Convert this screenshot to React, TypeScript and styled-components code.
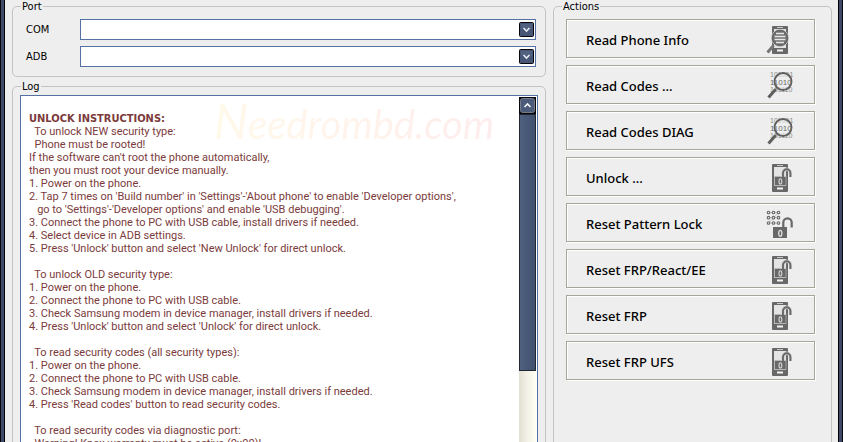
import React from "react";
import styled, { createGlobalStyle } from "styled-components";

const GlobalStyle = createGlobalStyle`
  *, *::before, *::after { box-sizing: border-box; }
  html, body { margin: 0; height: 100%; overflow: hidden; background: #eeeeee; }
  body, button, select {
    font-family: "DejaVu Sans Condensed", "Noto Sans", sans-serif;
    font-size: 11px;
    line-height: 13px;
    color: #000;
  }
`;

const Frame = styled.div`
  display: flex;
  min-height: 100vh;
  border-style: solid;
  border-width: 0 1px;
  border-color: #05070d;
  background: #3f4a69;
  padding: 0 3px;
`;

const Content = styled.main`
  flex: 1;
  display: grid;
  grid-template-columns: minmax(0, 1fr) 279px;
  gap: 7px;
  padding: 0 6px 0 7px;
  border-style: solid;
  border-width: 0 1px;
  border-color: #000;
  background: #eeeeee;
`;

const LeftColumn = styled.div`
  display: flex;
  flex-direction: column;
  gap: 3px;
`;

const Group = styled.fieldset`
  min-width: 0;
  margin: 0;
  padding: 0;
  border: 1px solid #c3c3c3;
  border-radius: 5px;
`;

const GroupTitle = styled.legend`
  margin-left: 8px;
  padding: 0 1px;
`;

const GroupBody = styled.div<{ $pad: string }>`
  padding: ${(p) => p.$pad};
`;

const Field = styled.div`
  display: grid;
  grid-template-columns: 54px minmax(0, 1fr);
  align-items: center;

  & + & {
    margin-top: 6px;
  }
`;

const Combo = styled.div`
  position: relative;
  display: flex;
`;

const Select = styled.select`
  width: 100%;
  height: 21px;
  appearance: none;
  border: 1px solid #5570a3;
  border-radius: 0;
  background: #fff;
`;

const ComboArrow = styled.svg`
  position: absolute;
  top: 3px;
  right: 2px;
  pointer-events: none;
`;

const LogBox = styled.div`
  position: relative;
  display: grid;
  grid-template-columns: minmax(0, 1fr) 17px;
  border: 1px solid #5570a3;
  background: #fff;
  padding: 1px;
`;

const LogText = styled.div`
  position: relative;
  padding: 15px 7px;
  color: #7b3b3b;
  font-family: Roboto, sans-serif;
  white-space: pre;
`;

const LogLine = styled.div<{ $strong?: boolean }>`
  min-height: 13px;
  font-weight: ${(p) => (p.$strong ? 700 : 400)};
  font-family: ${(p) => (p.$strong ? '"DejaVu Sans Condensed", sans-serif' : "inherit")};
`;

const Watermark = styled.div`
  position: absolute;
  top: 0;
  left: 192px;
  padding-right: 8px;
  font: italic 40px/48px Lato, sans-serif;
  color: transparent;
  background: linear-gradient(90deg, #fff9ea, #fff3ec 50%, #fdeced);
  background-clip: text;
  pointer-events: none;

  &::first-letter {
    font-size: 48px;
  }
`;

const Scrollbar = styled.div`
  display: flex;
  flex-direction: column;
  background: linear-gradient(90deg, #e2ded2, #f3f2e8 50%, #fffff2);
`;

const ScrollButton = styled.button`
  display: flex;
  height: 17px;
  padding: 0;
  border: 0;
`;

const Thumb = styled.div`
  height: 257px;
  border: 1px solid #22262e;
  background: linear-gradient(90deg, #4f6080, #40506f);
`;

const ActionList = styled.div`
  display: grid;
  gap: 7px;
`;

const ActionButton = styled.button`
  display: flex;
  align-items: center;
  justify-content: space-between;
  height: 39px;
  padding: 2px 18px 0 19px;
  border: 1px solid #a6a698;
  background: #eeeeee;
  box-shadow: inset 1px 1px #fff, 1px 1px #fff;
  font: 500 13px/18px "Noto Sans", sans-serif;
  text-align: left;
`;

const INK = "#686868";

const Icon = ({ children }: { children: React.ReactNode }) => (
  <svg width="32" height="32" viewBox="0 0 32 32" fill="none" aria-hidden="true">
    {children}
  </svg>
);

const PhoneBody = () => (
  <>
    <rect x="8" y="2" width="16" height="28" rx="1" fill={INK} />
    <rect x="10" y="5" width="12" height="19" fill="#e4e4e4" />
    <path d="M13 3.5h6" stroke="#c8c8c8" />
    <rect x="13" y="25.5" width="6" height="2" fill="#f2f2f2" />
  </>
);

const PhoneSearchIcon = () => (
  <Icon>
    <PhoneBody />
    <path d="M9.5 21.5 3.5 28.5" stroke="#777" strokeWidth="3" />
    <circle cx="16" cy="14" r="8.5" fill="#707070" stroke="#d0d0d0" />
    <circle cx="16" cy="14" r="7.5" stroke={INK} strokeWidth="1.5" />
    <path d="M12 9.5h8M10.5 12.5h11M10.5 15.5h11M12 18.5h8" stroke="#e6e6e6" strokeWidth="1.6" />
  </Icon>
);

const CodesIcon = () => (
  <Icon>
    <g fill="#8b8b86" fontFamily="Liberation Sans, sans-serif" fontSize="7">
      <text x="6" y="7">101001</text>
      <text x="6" y="22">101110</text>
    </g>
    <circle cx="19" cy="11.5" r="8.5" fill="#eeeeee" fillOpacity=".6" stroke="#5f5f5f" strokeWidth="1.9" />
    <text x="6" y="15" fill="#6c6c68" fontFamily="Liberation Sans, sans-serif" fontSize="8">11010</text>
    <path d="M12.5 18.5 10.5 20.5" stroke={INK} strokeWidth="1.5" />
    <path d="M11.5 19.5 4.5 27.5" stroke="#5f5f5f" strokeWidth="3" />
  </Icon>
);

const PhoneUnlockIcon = () => (
  <Icon>
    <PhoneBody />
    <rect x="10.5" y="14.5" width="11.5" height="9" fill={INK} stroke="#c4c4c4" strokeWidth=".6" />
    <path d="M19 15v-4a3.7 3.7 0 0 1 7.4 0v4" stroke="#d2d2d2" strokeWidth="3.4" />
    <path d="M19 15v-4a3.7 3.7 0 0 1 7.4 0v4" stroke={INK} strokeWidth="1.9" />
    <ellipse cx="16.4" cy="19.4" rx="1.4" ry="2.6" stroke="#d8d8d8" strokeWidth="1.1" />
  </Icon>
);

const PatternIcon = () => (
  <Icon>
    <path d="M4.5 4.5h10M4.5 9.5h10M4.5 15h10M14.5 4.5l-10 10.5" stroke="#b5b5b5" strokeWidth=".8" />
    {[4.5, 9.7, 15].map((y) =>
      [4.5, 9.5, 14.5].map((x) => (
        <circle key={`${x}-${y}`} cx={x} cy={y} r="1.3" fill="#eeeeee" stroke={INK} strokeWidth="1.1" />
      ))
    )}
    <rect x="9" y="19" width="14" height="11" fill={INK} />
    <path d="M19.3 19.5v-5a4 4 0 0 1 8.4 0v5" stroke={INK} strokeWidth="2.2" />
    <ellipse cx="16.3" cy="25.3" rx="1.6" ry="3" stroke="#e2e2e2" strokeWidth="1.3" />
  </Icon>
);

const actions = [
  { label: "Read Phone Info", Glyph: PhoneSearchIcon },
  { label: "Read Codes ...", Glyph: CodesIcon },
  { label: "Read Codes DIAG", Glyph: CodesIcon },
  { label: "Unlock ...", Glyph: PhoneUnlockIcon },
  { label: "Reset Pattern Lock", Glyph: PatternIcon },
  { label: "Reset FRP/React/EE", Glyph: PhoneUnlockIcon },
  { label: "Reset FRP", Glyph: PhoneUnlockIcon },
  { label: "Reset FRP UFS", Glyph: PhoneUnlockIcon },
];

const logLines = [
  "  To unlock NEW security type:",
  "  Phone must be rooted!",
  "If the software can't root the phone automatically,",
  "then you must root your device manually.",
  "1. Power on the phone.",
  "2. Tap 7 times on 'Build number' in 'Settings'-'About phone' to enable 'Developer options',",
  "   go to 'Settings'-'Developer options' and enable 'USB debugging'.",
  "3. Connect the phone to PC with USB cable, install drivers if needed.",
  "4. Select device in ADB settings.",
  "5. Press 'Unlock' button and select 'New Unlock' for direct unlock.",
  "",
  "  To unlock OLD security type:",
  "1. Power on the phone.",
  "2. Connect the phone to PC with USB cable.",
  "3. Check Samsung modem in device manager, install drivers if needed.",
  "4. Press 'Unlock' button and select 'Unlock' for direct unlock.",
  "",
  "  To read security codes (all security types):",
  "1. Power on the phone.",
  "2. Connect the phone to PC with USB cable.",
  "3. Check Samsung modem in device manager, install drivers if needed.",
  "4. Press 'Read codes' button to read security codes.",
  "",
  "  To read security codes via diagnostic port:",
  "  Warning! Knox warranty must be active (0x00)!",
];

const ports = ["COM", "ADB"];

export default function App() {
  return (
    <>
      <GlobalStyle />
      <Frame>
        <Content>
          <LeftColumn>
            <Group>
              <GroupTitle>Port</GroupTitle>
              <GroupBody $pad="6px 9px 9px 13px">
                {ports.map((port) => (
                  <Field key={port}>
                    <label htmlFor={port}>{port}</label>
                    <Combo>
                      <Select id={port} />
                      <ComboArrow width="15" height="15" viewBox="0 0 15 15" fill="none">
                        <rect x=".5" y=".5" width="14" height="14" rx="1" fill="#465674" stroke="#05070c" />
                        <path d="M2 2h11v5H2z" fill="#51617f" />
                        <path d="m4.5 6 3 3 3-3" stroke="#e6eaf2" strokeWidth="1.6" />
                      </ComboArrow>
                    </Combo>
                  </Field>
                ))}
              </GroupBody>
            </Group>
            <Group>
              <GroupTitle>Log</GroupTitle>
              <GroupBody $pad="2px 7px 8px 7px">
                <LogBox>
                  <LogText>
                    <Watermark>Needrombd.com</Watermark>
                    <LogLine $strong>UNLOCK INSTRUCTIONS:</LogLine>
                    {logLines.map((line, i) => (
                      <LogLine key={i}>{line}</LogLine>
                    ))}
                  </LogText>
                  <Scrollbar>
                    <ScrollButton type="button" aria-label="Scroll up">
                      <svg width="17" height="17" viewBox="0 0 17 17" fill="none">
                        <rect width="17" height="17" fill="#05070c" />
                        <rect x="1.5" y="1.5" width="14" height="14" rx="2" fill="#4b5b79" stroke="#777d88" />
                        <path d="m5.5 10 3-3 3 3" stroke="#f2f4f8" strokeWidth="1.6" />
                      </svg>
                    </ScrollButton>
                    <Thumb />
                  </Scrollbar>
                </LogBox>
              </GroupBody>
            </Group>
          </LeftColumn>
          <Group>
            <GroupTitle>Actions</GroupTitle>
            <GroupBody $pad="6px 16px 12px 12px">
              <ActionList>
                {actions.map(({ label, Glyph }) => (
                  <ActionButton type="button" key={label}>
                    {label}
                    <Glyph />
                  </ActionButton>
                ))}
              </ActionList>
            </GroupBody>
          </Group>
        </Content>
      </Frame>
    </>
  );
}
